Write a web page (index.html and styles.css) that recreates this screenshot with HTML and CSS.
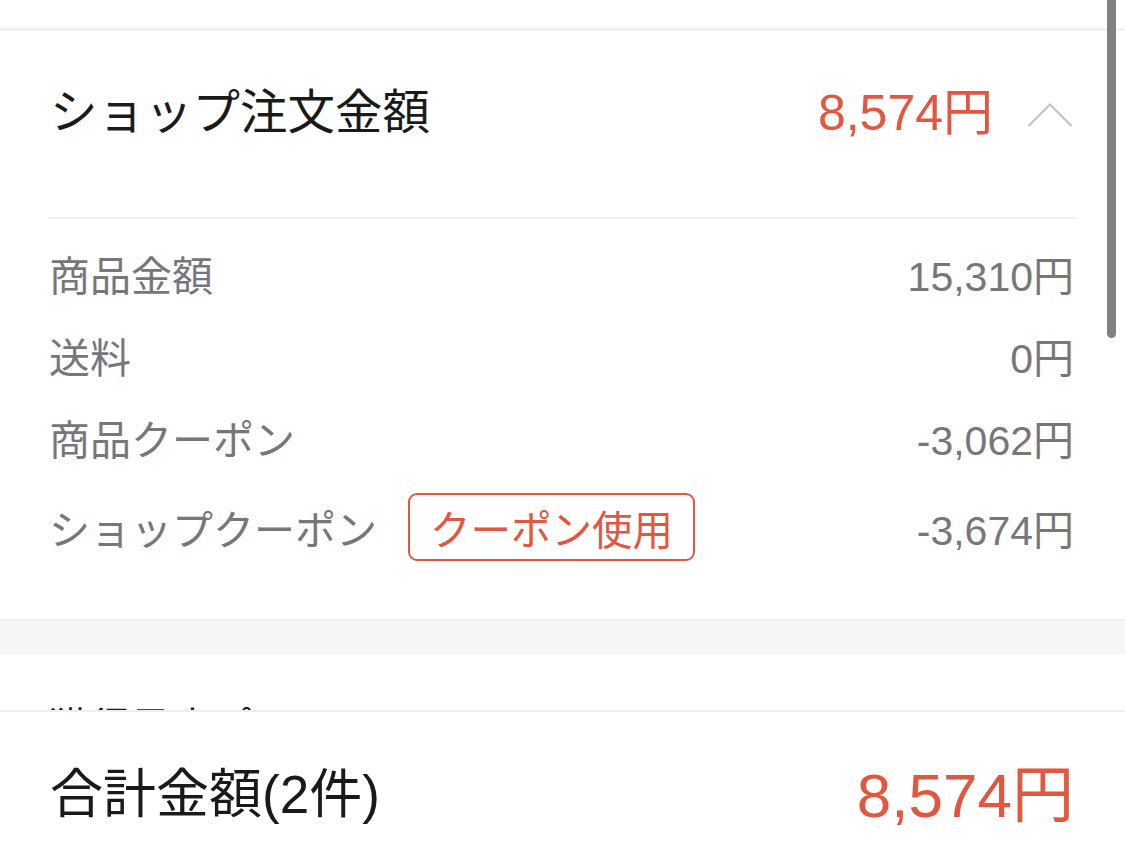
FILE: index.html
```html
<!DOCTYPE html>
<html lang="ja">
<head>
<meta charset="utf-8">
<link rel="stylesheet" href="styles.css">
</head>
<body>
<div class="top-spacer"></div>
<section class="card">
  <div class="card-head">
    <span class="head-label">ショップ注文金額</span>
    <div class="head-right">
      <span class="head-price">8,574円</span>
      <svg class="chevron" width="46" height="26" viewBox="0 0 46 26"><path d="M1.5 24 L23 2.5 L44.5 24" fill="none" stroke="#c4c4c4" stroke-width="2.2"/></svg>
    </div>
  </div>
  <div class="rows">
    <div class="row"><span class="row-label">商品金額</span><span class="row-value">15,310円</span></div>
    <div class="row"><span class="row-label">送料</span><span class="row-value">0円</span></div>
    <div class="row"><span class="row-label">商品クーポン</span><span class="row-value">-3,062円</span></div>
    <div class="row row-tall"><span class="row-label">ショップクーポン<span class="coupon-btn">クーポン使用</span></span><span class="row-value">-3,674円</span></div>
  </div>
</section>
<div class="gap-band"></div>
<section class="card card-next">
  <div class="row"><span class="row-label dark">獲得予定ポイント</span></div>
</section>
<footer class="footer">
  <span class="foot-label">合計金額(2件)</span>
  <span class="foot-price">8,574円</span>
</footer>
<div class="scrollbar"></div>
</body>
</html>
```
FILE: styles.css
```css
html, body {
  margin: 0;
  padding: 0;
  background: #ffffff;
}
body {
  font-family: "Liberation Sans", "Noto Sans CJK JP", sans-serif;
  color: #1a1a1a;
  overflow: hidden;
  height: 855px;
}
.top-spacer {
  height: 28px;
  border-bottom: 3px solid #f2f2f5;
}
.card {
  padding: 0 48px 43px;
  background: #fff;
}
.card-head {
  display: flex;
  justify-content: space-between;
  align-items: center;
  height: 60px;
  padding: 52px 0 74px 2px;
  border-bottom: 2px solid #f0f0f0;
}
.head-label {
  font-size: 47.5px;
  line-height: 60px;
  color: #1a1a1a;
}
.head-right {
  display: flex;
  align-items: center;
}
.head-price {
  font-size: 50px;
  line-height: 60px;
  color: #e2573f;
}
.chevron {
  margin-left: 34px;
  margin-right: 4px;
  margin-top: 4px;
}
.rows {
  padding-top: 13px;
}
.row {
  display: flex;
  justify-content: space-between;
  align-items: center;
  min-height: 82px;
  padding: 0 3px 0 1px;
}
.row-tall {
  min-height: 98px;
}
.row-label {
  display: flex;
  align-items: center;
  font-size: 41px;
  color: #77777b;
}
.row-label.dark {
  color: #1a1a1a;
}
.row-value {
  font-size: 41px;
  color: #77777b;
}
.coupon-btn {
  display: inline-flex;
  align-items: center;
  box-sizing: border-box;
  height: 68px;
  margin-left: 31px;
  padding: 0 20px 0 20px;
  border: 2px solid #e2573f;
  border-radius: 9px;
  color: #e2573f;
  font-size: 40.5px;
}
.gap-band {
  height: 34px;
  background: #f6f6f6;
  border-top: 2px solid #eeeeee;
}
.card-next {
  padding-top: 28px;
}
.footer {
  position: fixed;
  left: 0;
  right: 0;
  bottom: 0;
  box-sizing: border-box;
  height: 145px;
  padding: 12px 51px 0 50px;
  display: flex;
  justify-content: space-between;
  align-items: center;
  background: #fff;
  border-top: 2px solid #eeeeee;
}
.foot-label {
  font-size: 53px;
  color: #1a1a1a;
}
.foot-price {
  font-size: 62px;
  color: #e2573f;
}
.scrollbar {
  position: fixed;
  top: 0;
  right: 9px;
  width: 9px;
  height: 338px;
  background: #808080;
  border-radius: 0 0 5px 5px;
}
```
